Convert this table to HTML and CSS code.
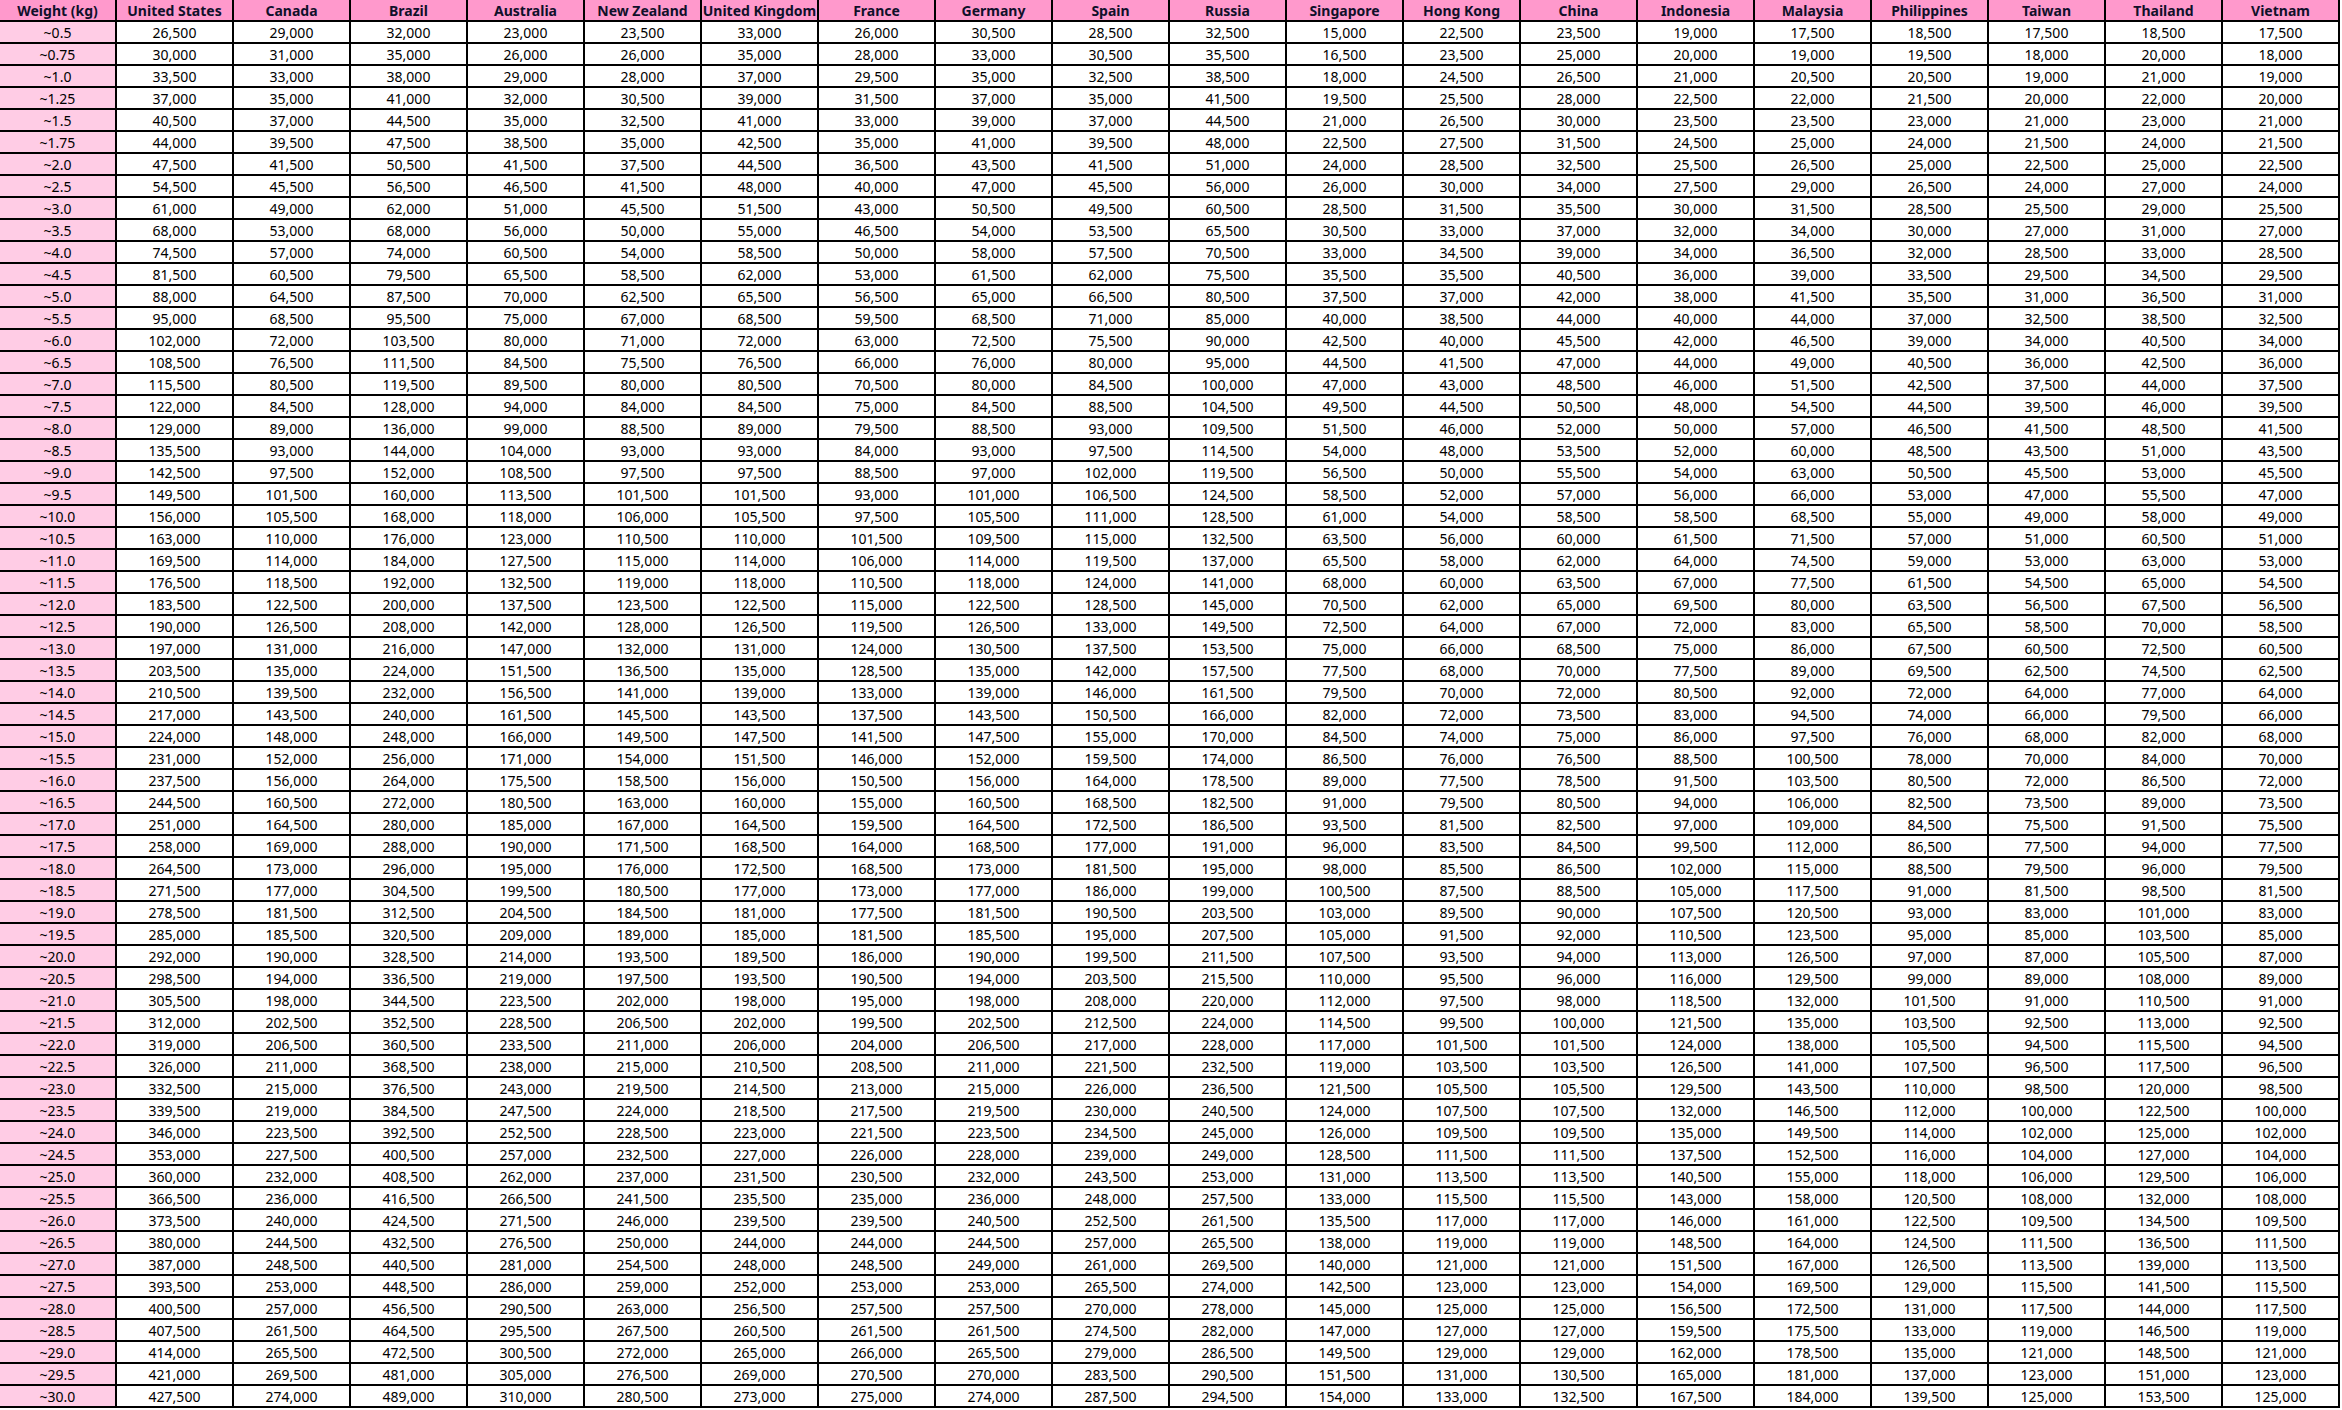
FILE: index.html
```html
<!DOCTYPE html>
<html lang="en">
<head>
<meta charset="utf-8">
<title>Shipping Rates</title>
<link rel="stylesheet" href="styles.css">
</head>
<body>
<table class="rates">
<thead>
<tr><th>Weight (kg)</th><th>United States</th><th>Canada</th><th>Brazil</th><th>Australia</th><th>New Zealand</th><th>United Kingdom</th><th>France</th><th>Germany</th><th>Spain</th><th>Russia</th><th>Singapore</th><th>Hong Kong</th><th>China</th><th>Indonesia</th><th>Malaysia</th><th>Philippines</th><th>Taiwan</th><th>Thailand</th><th>Vietnam</th></tr>
</thead>
<tbody>
<tr><td class="w">~0.5</td><td>26,500</td><td>29,000</td><td>32,000</td><td>23,000</td><td>23,500</td><td>33,000</td><td>26,000</td><td>30,500</td><td>28,500</td><td>32,500</td><td>15,000</td><td>22,500</td><td>23,500</td><td>19,000</td><td>17,500</td><td>18,500</td><td>17,500</td><td>18,500</td><td>17,500</td></tr>
<tr><td class="w">~0.75</td><td>30,000</td><td>31,000</td><td>35,000</td><td>26,000</td><td>26,000</td><td>35,000</td><td>28,000</td><td>33,000</td><td>30,500</td><td>35,500</td><td>16,500</td><td>23,500</td><td>25,000</td><td>20,000</td><td>19,000</td><td>19,500</td><td>18,000</td><td>20,000</td><td>18,000</td></tr>
<tr><td class="w">~1.0</td><td>33,500</td><td>33,000</td><td>38,000</td><td>29,000</td><td>28,000</td><td>37,000</td><td>29,500</td><td>35,000</td><td>32,500</td><td>38,500</td><td>18,000</td><td>24,500</td><td>26,500</td><td>21,000</td><td>20,500</td><td>20,500</td><td>19,000</td><td>21,000</td><td>19,000</td></tr>
<tr><td class="w">~1.25</td><td>37,000</td><td>35,000</td><td>41,000</td><td>32,000</td><td>30,500</td><td>39,000</td><td>31,500</td><td>37,000</td><td>35,000</td><td>41,500</td><td>19,500</td><td>25,500</td><td>28,000</td><td>22,500</td><td>22,000</td><td>21,500</td><td>20,000</td><td>22,000</td><td>20,000</td></tr>
<tr><td class="w">~1.5</td><td>40,500</td><td>37,000</td><td>44,500</td><td>35,000</td><td>32,500</td><td>41,000</td><td>33,000</td><td>39,000</td><td>37,000</td><td>44,500</td><td>21,000</td><td>26,500</td><td>30,000</td><td>23,500</td><td>23,500</td><td>23,000</td><td>21,000</td><td>23,000</td><td>21,000</td></tr>
<tr><td class="w">~1.75</td><td>44,000</td><td>39,500</td><td>47,500</td><td>38,500</td><td>35,000</td><td>42,500</td><td>35,000</td><td>41,000</td><td>39,500</td><td>48,000</td><td>22,500</td><td>27,500</td><td>31,500</td><td>24,500</td><td>25,000</td><td>24,000</td><td>21,500</td><td>24,000</td><td>21,500</td></tr>
<tr><td class="w">~2.0</td><td>47,500</td><td>41,500</td><td>50,500</td><td>41,500</td><td>37,500</td><td>44,500</td><td>36,500</td><td>43,500</td><td>41,500</td><td>51,000</td><td>24,000</td><td>28,500</td><td>32,500</td><td>25,500</td><td>26,500</td><td>25,000</td><td>22,500</td><td>25,000</td><td>22,500</td></tr>
<tr><td class="w">~2.5</td><td>54,500</td><td>45,500</td><td>56,500</td><td>46,500</td><td>41,500</td><td>48,000</td><td>40,000</td><td>47,000</td><td>45,500</td><td>56,000</td><td>26,000</td><td>30,000</td><td>34,000</td><td>27,500</td><td>29,000</td><td>26,500</td><td>24,000</td><td>27,000</td><td>24,000</td></tr>
<tr><td class="w">~3.0</td><td>61,000</td><td>49,000</td><td>62,000</td><td>51,000</td><td>45,500</td><td>51,500</td><td>43,000</td><td>50,500</td><td>49,500</td><td>60,500</td><td>28,500</td><td>31,500</td><td>35,500</td><td>30,000</td><td>31,500</td><td>28,500</td><td>25,500</td><td>29,000</td><td>25,500</td></tr>
<tr><td class="w">~3.5</td><td>68,000</td><td>53,000</td><td>68,000</td><td>56,000</td><td>50,000</td><td>55,000</td><td>46,500</td><td>54,000</td><td>53,500</td><td>65,500</td><td>30,500</td><td>33,000</td><td>37,000</td><td>32,000</td><td>34,000</td><td>30,000</td><td>27,000</td><td>31,000</td><td>27,000</td></tr>
<tr><td class="w">~4.0</td><td>74,500</td><td>57,000</td><td>74,000</td><td>60,500</td><td>54,000</td><td>58,500</td><td>50,000</td><td>58,000</td><td>57,500</td><td>70,500</td><td>33,000</td><td>34,500</td><td>39,000</td><td>34,000</td><td>36,500</td><td>32,000</td><td>28,500</td><td>33,000</td><td>28,500</td></tr>
<tr><td class="w">~4.5</td><td>81,500</td><td>60,500</td><td>79,500</td><td>65,500</td><td>58,500</td><td>62,000</td><td>53,000</td><td>61,500</td><td>62,000</td><td>75,500</td><td>35,500</td><td>35,500</td><td>40,500</td><td>36,000</td><td>39,000</td><td>33,500</td><td>29,500</td><td>34,500</td><td>29,500</td></tr>
<tr><td class="w">~5.0</td><td>88,000</td><td>64,500</td><td>87,500</td><td>70,000</td><td>62,500</td><td>65,500</td><td>56,500</td><td>65,000</td><td>66,500</td><td>80,500</td><td>37,500</td><td>37,000</td><td>42,000</td><td>38,000</td><td>41,500</td><td>35,500</td><td>31,000</td><td>36,500</td><td>31,000</td></tr>
<tr><td class="w">~5.5</td><td>95,000</td><td>68,500</td><td>95,500</td><td>75,000</td><td>67,000</td><td>68,500</td><td>59,500</td><td>68,500</td><td>71,000</td><td>85,000</td><td>40,000</td><td>38,500</td><td>44,000</td><td>40,000</td><td>44,000</td><td>37,000</td><td>32,500</td><td>38,500</td><td>32,500</td></tr>
<tr><td class="w">~6.0</td><td>102,000</td><td>72,000</td><td>103,500</td><td>80,000</td><td>71,000</td><td>72,000</td><td>63,000</td><td>72,500</td><td>75,500</td><td>90,000</td><td>42,500</td><td>40,000</td><td>45,500</td><td>42,000</td><td>46,500</td><td>39,000</td><td>34,000</td><td>40,500</td><td>34,000</td></tr>
<tr><td class="w">~6.5</td><td>108,500</td><td>76,500</td><td>111,500</td><td>84,500</td><td>75,500</td><td>76,500</td><td>66,000</td><td>76,000</td><td>80,000</td><td>95,000</td><td>44,500</td><td>41,500</td><td>47,000</td><td>44,000</td><td>49,000</td><td>40,500</td><td>36,000</td><td>42,500</td><td>36,000</td></tr>
<tr><td class="w">~7.0</td><td>115,500</td><td>80,500</td><td>119,500</td><td>89,500</td><td>80,000</td><td>80,500</td><td>70,500</td><td>80,000</td><td>84,500</td><td>100,000</td><td>47,000</td><td>43,000</td><td>48,500</td><td>46,000</td><td>51,500</td><td>42,500</td><td>37,500</td><td>44,000</td><td>37,500</td></tr>
<tr><td class="w">~7.5</td><td>122,000</td><td>84,500</td><td>128,000</td><td>94,000</td><td>84,000</td><td>84,500</td><td>75,000</td><td>84,500</td><td>88,500</td><td>104,500</td><td>49,500</td><td>44,500</td><td>50,500</td><td>48,000</td><td>54,500</td><td>44,500</td><td>39,500</td><td>46,000</td><td>39,500</td></tr>
<tr><td class="w">~8.0</td><td>129,000</td><td>89,000</td><td>136,000</td><td>99,000</td><td>88,500</td><td>89,000</td><td>79,500</td><td>88,500</td><td>93,000</td><td>109,500</td><td>51,500</td><td>46,000</td><td>52,000</td><td>50,000</td><td>57,000</td><td>46,500</td><td>41,500</td><td>48,500</td><td>41,500</td></tr>
<tr><td class="w">~8.5</td><td>135,500</td><td>93,000</td><td>144,000</td><td>104,000</td><td>93,000</td><td>93,000</td><td>84,000</td><td>93,000</td><td>97,500</td><td>114,500</td><td>54,000</td><td>48,000</td><td>53,500</td><td>52,000</td><td>60,000</td><td>48,500</td><td>43,500</td><td>51,000</td><td>43,500</td></tr>
<tr><td class="w">~9.0</td><td>142,500</td><td>97,500</td><td>152,000</td><td>108,500</td><td>97,500</td><td>97,500</td><td>88,500</td><td>97,000</td><td>102,000</td><td>119,500</td><td>56,500</td><td>50,000</td><td>55,500</td><td>54,000</td><td>63,000</td><td>50,500</td><td>45,500</td><td>53,000</td><td>45,500</td></tr>
<tr><td class="w">~9.5</td><td>149,500</td><td>101,500</td><td>160,000</td><td>113,500</td><td>101,500</td><td>101,500</td><td>93,000</td><td>101,000</td><td>106,500</td><td>124,500</td><td>58,500</td><td>52,000</td><td>57,000</td><td>56,000</td><td>66,000</td><td>53,000</td><td>47,000</td><td>55,500</td><td>47,000</td></tr>
<tr><td class="w">~10.0</td><td>156,000</td><td>105,500</td><td>168,000</td><td>118,000</td><td>106,000</td><td>105,500</td><td>97,500</td><td>105,500</td><td>111,000</td><td>128,500</td><td>61,000</td><td>54,000</td><td>58,500</td><td>58,500</td><td>68,500</td><td>55,000</td><td>49,000</td><td>58,000</td><td>49,000</td></tr>
<tr><td class="w">~10.5</td><td>163,000</td><td>110,000</td><td>176,000</td><td>123,000</td><td>110,500</td><td>110,000</td><td>101,500</td><td>109,500</td><td>115,000</td><td>132,500</td><td>63,500</td><td>56,000</td><td>60,000</td><td>61,500</td><td>71,500</td><td>57,000</td><td>51,000</td><td>60,500</td><td>51,000</td></tr>
<tr><td class="w">~11.0</td><td>169,500</td><td>114,000</td><td>184,000</td><td>127,500</td><td>115,000</td><td>114,000</td><td>106,000</td><td>114,000</td><td>119,500</td><td>137,000</td><td>65,500</td><td>58,000</td><td>62,000</td><td>64,000</td><td>74,500</td><td>59,000</td><td>53,000</td><td>63,000</td><td>53,000</td></tr>
<tr><td class="w">~11.5</td><td>176,500</td><td>118,500</td><td>192,000</td><td>132,500</td><td>119,000</td><td>118,000</td><td>110,500</td><td>118,000</td><td>124,000</td><td>141,000</td><td>68,000</td><td>60,000</td><td>63,500</td><td>67,000</td><td>77,500</td><td>61,500</td><td>54,500</td><td>65,000</td><td>54,500</td></tr>
<tr><td class="w">~12.0</td><td>183,500</td><td>122,500</td><td>200,000</td><td>137,500</td><td>123,500</td><td>122,500</td><td>115,000</td><td>122,500</td><td>128,500</td><td>145,000</td><td>70,500</td><td>62,000</td><td>65,000</td><td>69,500</td><td>80,000</td><td>63,500</td><td>56,500</td><td>67,500</td><td>56,500</td></tr>
<tr><td class="w">~12.5</td><td>190,000</td><td>126,500</td><td>208,000</td><td>142,000</td><td>128,000</td><td>126,500</td><td>119,500</td><td>126,500</td><td>133,000</td><td>149,500</td><td>72,500</td><td>64,000</td><td>67,000</td><td>72,000</td><td>83,000</td><td>65,500</td><td>58,500</td><td>70,000</td><td>58,500</td></tr>
<tr><td class="w">~13.0</td><td>197,000</td><td>131,000</td><td>216,000</td><td>147,000</td><td>132,000</td><td>131,000</td><td>124,000</td><td>130,500</td><td>137,500</td><td>153,500</td><td>75,000</td><td>66,000</td><td>68,500</td><td>75,000</td><td>86,000</td><td>67,500</td><td>60,500</td><td>72,500</td><td>60,500</td></tr>
<tr><td class="w">~13.5</td><td>203,500</td><td>135,000</td><td>224,000</td><td>151,500</td><td>136,500</td><td>135,000</td><td>128,500</td><td>135,000</td><td>142,000</td><td>157,500</td><td>77,500</td><td>68,000</td><td>70,000</td><td>77,500</td><td>89,000</td><td>69,500</td><td>62,500</td><td>74,500</td><td>62,500</td></tr>
<tr><td class="w">~14.0</td><td>210,500</td><td>139,500</td><td>232,000</td><td>156,500</td><td>141,000</td><td>139,000</td><td>133,000</td><td>139,000</td><td>146,000</td><td>161,500</td><td>79,500</td><td>70,000</td><td>72,000</td><td>80,500</td><td>92,000</td><td>72,000</td><td>64,000</td><td>77,000</td><td>64,000</td></tr>
<tr><td class="w">~14.5</td><td>217,000</td><td>143,500</td><td>240,000</td><td>161,500</td><td>145,500</td><td>143,500</td><td>137,500</td><td>143,500</td><td>150,500</td><td>166,000</td><td>82,000</td><td>72,000</td><td>73,500</td><td>83,000</td><td>94,500</td><td>74,000</td><td>66,000</td><td>79,500</td><td>66,000</td></tr>
<tr><td class="w">~15.0</td><td>224,000</td><td>148,000</td><td>248,000</td><td>166,000</td><td>149,500</td><td>147,500</td><td>141,500</td><td>147,500</td><td>155,000</td><td>170,000</td><td>84,500</td><td>74,000</td><td>75,000</td><td>86,000</td><td>97,500</td><td>76,000</td><td>68,000</td><td>82,000</td><td>68,000</td></tr>
<tr><td class="w">~15.5</td><td>231,000</td><td>152,000</td><td>256,000</td><td>171,000</td><td>154,000</td><td>151,500</td><td>146,000</td><td>152,000</td><td>159,500</td><td>174,000</td><td>86,500</td><td>76,000</td><td>76,500</td><td>88,500</td><td>100,500</td><td>78,000</td><td>70,000</td><td>84,000</td><td>70,000</td></tr>
<tr><td class="w">~16.0</td><td>237,500</td><td>156,000</td><td>264,000</td><td>175,500</td><td>158,500</td><td>156,000</td><td>150,500</td><td>156,000</td><td>164,000</td><td>178,500</td><td>89,000</td><td>77,500</td><td>78,500</td><td>91,500</td><td>103,500</td><td>80,500</td><td>72,000</td><td>86,500</td><td>72,000</td></tr>
<tr><td class="w">~16.5</td><td>244,500</td><td>160,500</td><td>272,000</td><td>180,500</td><td>163,000</td><td>160,000</td><td>155,000</td><td>160,500</td><td>168,500</td><td>182,500</td><td>91,000</td><td>79,500</td><td>80,500</td><td>94,000</td><td>106,000</td><td>82,500</td><td>73,500</td><td>89,000</td><td>73,500</td></tr>
<tr><td class="w">~17.0</td><td>251,000</td><td>164,500</td><td>280,000</td><td>185,000</td><td>167,000</td><td>164,500</td><td>159,500</td><td>164,500</td><td>172,500</td><td>186,500</td><td>93,500</td><td>81,500</td><td>82,500</td><td>97,000</td><td>109,000</td><td>84,500</td><td>75,500</td><td>91,500</td><td>75,500</td></tr>
<tr><td class="w">~17.5</td><td>258,000</td><td>169,000</td><td>288,000</td><td>190,000</td><td>171,500</td><td>168,500</td><td>164,000</td><td>168,500</td><td>177,000</td><td>191,000</td><td>96,000</td><td>83,500</td><td>84,500</td><td>99,500</td><td>112,000</td><td>86,500</td><td>77,500</td><td>94,000</td><td>77,500</td></tr>
<tr><td class="w">~18.0</td><td>264,500</td><td>173,000</td><td>296,000</td><td>195,000</td><td>176,000</td><td>172,500</td><td>168,500</td><td>173,000</td><td>181,500</td><td>195,000</td><td>98,000</td><td>85,500</td><td>86,500</td><td>102,000</td><td>115,000</td><td>88,500</td><td>79,500</td><td>96,000</td><td>79,500</td></tr>
<tr><td class="w">~18.5</td><td>271,500</td><td>177,000</td><td>304,500</td><td>199,500</td><td>180,500</td><td>177,000</td><td>173,000</td><td>177,000</td><td>186,000</td><td>199,000</td><td>100,500</td><td>87,500</td><td>88,500</td><td>105,000</td><td>117,500</td><td>91,000</td><td>81,500</td><td>98,500</td><td>81,500</td></tr>
<tr><td class="w">~19.0</td><td>278,500</td><td>181,500</td><td>312,500</td><td>204,500</td><td>184,500</td><td>181,000</td><td>177,500</td><td>181,500</td><td>190,500</td><td>203,500</td><td>103,000</td><td>89,500</td><td>90,000</td><td>107,500</td><td>120,500</td><td>93,000</td><td>83,000</td><td>101,000</td><td>83,000</td></tr>
<tr><td class="w">~19.5</td><td>285,000</td><td>185,500</td><td>320,500</td><td>209,000</td><td>189,000</td><td>185,000</td><td>181,500</td><td>185,500</td><td>195,000</td><td>207,500</td><td>105,000</td><td>91,500</td><td>92,000</td><td>110,500</td><td>123,500</td><td>95,000</td><td>85,000</td><td>103,500</td><td>85,000</td></tr>
<tr><td class="w">~20.0</td><td>292,000</td><td>190,000</td><td>328,500</td><td>214,000</td><td>193,500</td><td>189,500</td><td>186,000</td><td>190,000</td><td>199,500</td><td>211,500</td><td>107,500</td><td>93,500</td><td>94,000</td><td>113,000</td><td>126,500</td><td>97,000</td><td>87,000</td><td>105,500</td><td>87,000</td></tr>
<tr><td class="w">~20.5</td><td>298,500</td><td>194,000</td><td>336,500</td><td>219,000</td><td>197,500</td><td>193,500</td><td>190,500</td><td>194,000</td><td>203,500</td><td>215,500</td><td>110,000</td><td>95,500</td><td>96,000</td><td>116,000</td><td>129,500</td><td>99,000</td><td>89,000</td><td>108,000</td><td>89,000</td></tr>
<tr><td class="w">~21.0</td><td>305,500</td><td>198,000</td><td>344,500</td><td>223,500</td><td>202,000</td><td>198,000</td><td>195,000</td><td>198,000</td><td>208,000</td><td>220,000</td><td>112,000</td><td>97,500</td><td>98,000</td><td>118,500</td><td>132,000</td><td>101,500</td><td>91,000</td><td>110,500</td><td>91,000</td></tr>
<tr><td class="w">~21.5</td><td>312,000</td><td>202,500</td><td>352,500</td><td>228,500</td><td>206,500</td><td>202,000</td><td>199,500</td><td>202,500</td><td>212,500</td><td>224,000</td><td>114,500</td><td>99,500</td><td>100,000</td><td>121,500</td><td>135,000</td><td>103,500</td><td>92,500</td><td>113,000</td><td>92,500</td></tr>
<tr><td class="w">~22.0</td><td>319,000</td><td>206,500</td><td>360,500</td><td>233,500</td><td>211,000</td><td>206,000</td><td>204,000</td><td>206,500</td><td>217,000</td><td>228,000</td><td>117,000</td><td>101,500</td><td>101,500</td><td>124,000</td><td>138,000</td><td>105,500</td><td>94,500</td><td>115,500</td><td>94,500</td></tr>
<tr><td class="w">~22.5</td><td>326,000</td><td>211,000</td><td>368,500</td><td>238,000</td><td>215,000</td><td>210,500</td><td>208,500</td><td>211,000</td><td>221,500</td><td>232,500</td><td>119,000</td><td>103,500</td><td>103,500</td><td>126,500</td><td>141,000</td><td>107,500</td><td>96,500</td><td>117,500</td><td>96,500</td></tr>
<tr><td class="w">~23.0</td><td>332,500</td><td>215,000</td><td>376,500</td><td>243,000</td><td>219,500</td><td>214,500</td><td>213,000</td><td>215,000</td><td>226,000</td><td>236,500</td><td>121,500</td><td>105,500</td><td>105,500</td><td>129,500</td><td>143,500</td><td>110,000</td><td>98,500</td><td>120,000</td><td>98,500</td></tr>
<tr><td class="w">~23.5</td><td>339,500</td><td>219,000</td><td>384,500</td><td>247,500</td><td>224,000</td><td>218,500</td><td>217,500</td><td>219,500</td><td>230,000</td><td>240,500</td><td>124,000</td><td>107,500</td><td>107,500</td><td>132,000</td><td>146,500</td><td>112,000</td><td>100,000</td><td>122,500</td><td>100,000</td></tr>
<tr><td class="w">~24.0</td><td>346,000</td><td>223,500</td><td>392,500</td><td>252,500</td><td>228,500</td><td>223,000</td><td>221,500</td><td>223,500</td><td>234,500</td><td>245,000</td><td>126,000</td><td>109,500</td><td>109,500</td><td>135,000</td><td>149,500</td><td>114,000</td><td>102,000</td><td>125,000</td><td>102,000</td></tr>
<tr><td class="w">~24.5</td><td>353,000</td><td>227,500</td><td>400,500</td><td>257,000</td><td>232,500</td><td>227,000</td><td>226,000</td><td>228,000</td><td>239,000</td><td>249,000</td><td>128,500</td><td>111,500</td><td>111,500</td><td>137,500</td><td>152,500</td><td>116,000</td><td>104,000</td><td>127,000</td><td>104,000</td></tr>
<tr><td class="w">~25.0</td><td>360,000</td><td>232,000</td><td>408,500</td><td>262,000</td><td>237,000</td><td>231,500</td><td>230,500</td><td>232,000</td><td>243,500</td><td>253,000</td><td>131,000</td><td>113,500</td><td>113,500</td><td>140,500</td><td>155,000</td><td>118,000</td><td>106,000</td><td>129,500</td><td>106,000</td></tr>
<tr><td class="w">~25.5</td><td>366,500</td><td>236,000</td><td>416,500</td><td>266,500</td><td>241,500</td><td>235,500</td><td>235,000</td><td>236,000</td><td>248,000</td><td>257,500</td><td>133,000</td><td>115,500</td><td>115,500</td><td>143,000</td><td>158,000</td><td>120,500</td><td>108,000</td><td>132,000</td><td>108,000</td></tr>
<tr><td class="w">~26.0</td><td>373,500</td><td>240,000</td><td>424,500</td><td>271,500</td><td>246,000</td><td>239,500</td><td>239,500</td><td>240,500</td><td>252,500</td><td>261,500</td><td>135,500</td><td>117,000</td><td>117,000</td><td>146,000</td><td>161,000</td><td>122,500</td><td>109,500</td><td>134,500</td><td>109,500</td></tr>
<tr><td class="w">~26.5</td><td>380,000</td><td>244,500</td><td>432,500</td><td>276,500</td><td>250,000</td><td>244,000</td><td>244,000</td><td>244,500</td><td>257,000</td><td>265,500</td><td>138,000</td><td>119,000</td><td>119,000</td><td>148,500</td><td>164,000</td><td>124,500</td><td>111,500</td><td>136,500</td><td>111,500</td></tr>
<tr><td class="w">~27.0</td><td>387,000</td><td>248,500</td><td>440,500</td><td>281,000</td><td>254,500</td><td>248,000</td><td>248,500</td><td>249,000</td><td>261,000</td><td>269,500</td><td>140,000</td><td>121,000</td><td>121,000</td><td>151,500</td><td>167,000</td><td>126,500</td><td>113,500</td><td>139,000</td><td>113,500</td></tr>
<tr><td class="w">~27.5</td><td>393,500</td><td>253,000</td><td>448,500</td><td>286,000</td><td>259,000</td><td>252,000</td><td>253,000</td><td>253,000</td><td>265,500</td><td>274,000</td><td>142,500</td><td>123,000</td><td>123,000</td><td>154,000</td><td>169,500</td><td>129,000</td><td>115,500</td><td>141,500</td><td>115,500</td></tr>
<tr><td class="w">~28.0</td><td>400,500</td><td>257,000</td><td>456,500</td><td>290,500</td><td>263,000</td><td>256,500</td><td>257,500</td><td>257,500</td><td>270,000</td><td>278,000</td><td>145,000</td><td>125,000</td><td>125,000</td><td>156,500</td><td>172,500</td><td>131,000</td><td>117,500</td><td>144,000</td><td>117,500</td></tr>
<tr><td class="w">~28.5</td><td>407,500</td><td>261,500</td><td>464,500</td><td>295,500</td><td>267,500</td><td>260,500</td><td>261,500</td><td>261,500</td><td>274,500</td><td>282,000</td><td>147,000</td><td>127,000</td><td>127,000</td><td>159,500</td><td>175,500</td><td>133,000</td><td>119,000</td><td>146,500</td><td>119,000</td></tr>
<tr><td class="w">~29.0</td><td>414,000</td><td>265,500</td><td>472,500</td><td>300,500</td><td>272,000</td><td>265,000</td><td>266,000</td><td>265,500</td><td>279,000</td><td>286,500</td><td>149,500</td><td>129,000</td><td>129,000</td><td>162,000</td><td>178,500</td><td>135,000</td><td>121,000</td><td>148,500</td><td>121,000</td></tr>
<tr><td class="w">~29.5</td><td>421,000</td><td>269,500</td><td>481,000</td><td>305,000</td><td>276,500</td><td>269,000</td><td>270,500</td><td>270,000</td><td>283,500</td><td>290,500</td><td>151,500</td><td>131,000</td><td>130,500</td><td>165,000</td><td>181,000</td><td>137,000</td><td>123,000</td><td>151,000</td><td>123,000</td></tr>
<tr><td class="w">~30.0</td><td>427,500</td><td>274,000</td><td>489,000</td><td>310,000</td><td>280,500</td><td>273,000</td><td>275,000</td><td>274,000</td><td>287,500</td><td>294,500</td><td>154,000</td><td>133,000</td><td>132,500</td><td>167,500</td><td>184,000</td><td>139,500</td><td>125,000</td><td>153,500</td><td>125,000</td></tr>
</tbody>
</table>
</body>
</html>
```

FILE: styles.css
```css
html, body {
  margin: 0;
  padding: 0;
  background: #ffffff;
}

.rates {
  border-collapse: separate;
  border-spacing: 0;
  table-layout: fixed;
  width: 2340px;
  font-family: "Noto Sans", "Open Sans", sans-serif;
  font-size: 14px;
  color: #000000;
}

.rates th,
.rates td {
  height: 18px;
  padding: 2px 0 0 0;
  line-height: 18px;
  text-align: center;
  vertical-align: middle;
  white-space: nowrap;
  overflow: hidden;
  border-right: 2px solid #000000;
  border-bottom: 2px solid #000000;
}

.rates th {
  background: #ff99cc;
  font-weight: 700;
  color: #10102a;
}

.rates td.w {
  background: #ffcce5;
}
```
